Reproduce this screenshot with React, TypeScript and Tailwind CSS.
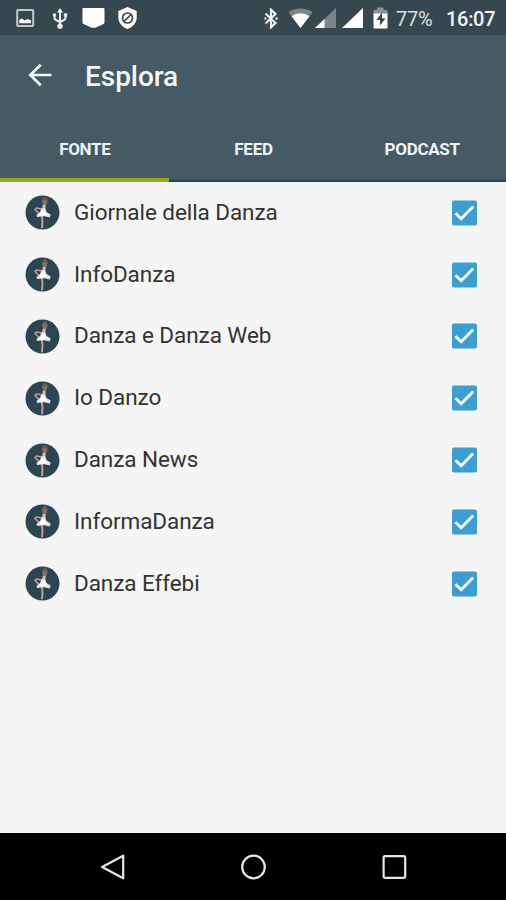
import { useState } from 'react';

const tabs = ['FONTE', 'FEED', 'PODCAST'];

const sources = [
  'Giornale della Danza',
  'InfoDanza',
  'Danza e Danza Web',
  'Io Danzo',
  'Danza News',
  'InformaDanza',
  'Danza Effebi',
];

const StatusBar = () => (
  <div className="flex h-[35px] shrink-0 items-start bg-[#37474f] text-white">
    <svg className="ml-[16px] mt-[9px] h-[18px] w-[19px]" viewBox="0 0 19 18" fill="none">
      <rect x="1.2" y="1" width="16" height="16" rx=".8" stroke="#c3cacd" strokeWidth="2" />
      <path d="M3.300 14.300v-3.500L6 9.500l2.500 2 3-1.500 3.500 1.500v2.800z" fill="#fff" />
    </svg>
    <svg className="ml-[17px] mt-[8px] h-[21px] w-[16px]" viewBox="0 0 16 21" fill="none" stroke="#eef0f1" strokeWidth="2">
      <path d="M8 3v15M2.500 7.500v2.200c0 1.800 1 2.300 2.500 2.800l3 1.500M13.500 7.500v2c0 1.800-1 2.500-2.500 3l-3 1.500" />
      <path d="M8 0l3 4.500h-6z" fill="#eef0f1" stroke="none" />
      <circle cx="8" cy="18.300" r="2.700" fill="#eef0f1" stroke="none" />
      <circle cx="2.500" cy="7" r="1.800" fill="#eef0f1" stroke="none" />
      <path d="M11.800 5.300h3.400v3.400h-3.400z" fill="#eef0f1" stroke="none" />
    </svg>
    <svg className="ml-[14px] mt-[8px] h-[20px] w-[23px]" viewBox="0 0 23 20" fill="#fff">
      <path d="M1.500 0h20Q22.500 0 22.500 1v13.500q0 1-1 1.500l-7 3.300q-3 1-6 0L1.500 16q-1-.5-1-1.500V1q0-1 1-1z" />
    </svg>
    <svg className="ml-[12.500px] mt-[7px] h-[22px] w-[19px]" viewBox="0 0 19 22" fill="none">
      <path d="M9.500 0L18.700 4v6.500c0 5-4 10-9.200 11.500C4.300 20.500.3 15.500.3 10.500V4z" fill="#fff" />
      <circle cx="9.500" cy="11" r="5" stroke="#37474f" strokeWidth="1.700" />
      <path d="M6 14.500l7-7" stroke="#37474f" strokeWidth="1.700" />
    </svg>

    <svg className="ml-auto mt-[8px] h-[21px] w-[14px]" viewBox="0 0 14 21" fill="none" stroke="#eef0f1" strokeWidth="2.200">
      <path d="M1.500 5.500l10 9.500L7 19.300V1.700L11.500 6l-10 9.500" />
      <path d="M1.400 10.500h.1M12.500 10.500h.1" strokeWidth="2.400" strokeLinecap="round" />
    </svg>
    <svg className="ml-[10px] mt-[8px] h-[20px] w-[26px]" viewBox="0 0 26 20">
      <path d="M12.500 20L.5 4.200Q6 .5 12.500.5t12 3.700z" fill="#7b868b" />
      <path d="M12.500 20L3.500 8.300Q7.500 5.300 12.500 5.300t9 3z" fill="#fff" />
    </svg>
    <svg className="ml-[1px] mt-[8px] h-[20px] w-[21px]" viewBox="0 0 21 20">
      <path d="M0 20L21 0v20z" fill="#7b868b" />
      <path d="M0 20l9.500-9v9z" fill="#fff" />
    </svg>
    <svg className="ml-[6px] mt-[8px] h-[20px] w-[21px]" viewBox="0 0 21 20">
      <path d="M0 20L21 0v20z" fill="#fff" />
    </svg>
    <svg className="ml-[10px] mt-[7px] h-[22px] w-[15px]" viewBox="0 0 15 22">
      <path d="M4 .5h6.500V3H13q1.500 0 1.500 1v3H.5V4q0-1 1-1H4z" fill="#8b969a" />
      <path d="M.5 6.500h14v14q0 1-1 1h-12q-1 0-1-1z" fill="#fff" />
      <path d="M9 5.500L3.500 13H7v5.500l5.500-7.300H9z" fill="#37474f" />
    </svg>
    <span className="ml-[8px] mt-[5px] w-[50px] whitespace-nowrap text-[20px] leading-7 tracking-[-0.2px] text-[#dce0e2]">77%</span>
    <span className="mt-[5px] w-[60px] whitespace-nowrap text-[20px] font-medium leading-7 tracking-[-0.3px] text-[#f3f5f6]">16:07</span>
  </div>
);

// Dancer on a dark disc, shared by every source
const SourceAvatar = () => (
  <svg className="h-[35px] w-[35px] shrink-0" viewBox="0 0 35 35">
    <circle cx="17.500" cy="17.500" r="17" fill="#2b4552" />
    <path d="M18.500 8L18 5l2.500-3M20.500 10l1.500-4-1-3" fill="none" stroke="#80665c" strokeWidth="1.400" />
    <circle cx="19.400" cy="7" r="2.200" fill="#906d61" />
    <path d="M17.500 14l-6-1-1.500 1.500 5 5" fill="none" stroke="#c49f92" strokeWidth="1.600" />
    <path d="M16.800 21l.7 5.500-.5 6.800" fill="none" stroke="#c9a291" strokeWidth="1.900" />
    <path d="M17.800 9.500h3l-.6 6-3.700 1z" fill="#dcb5a7" />
    <path d="M16.500 13.500l3.500-.5 1.500 4 4.200 2.500-1 3-5.200-1.200-7.500.7-.5-2 3.500-3z" fill="#ebe4e8" />
    <path d="M17 15l-3.500 5.500 8-.5-2-4z" fill="#fff" />
  </svg>
);

interface SourceRowProps {
  name: string;
  checked: boolean;
  onToggle: () => void;
}

const SourceRow = ({ name, checked, onToggle }: SourceRowProps) => (
  <li className="flex h-[61.800px] items-center pl-[25px] pr-[29px]">
    <SourceAvatar />
    <span className="-mt-0.5 ml-[14px] flex-1 whitespace-nowrap text-[22.500px] leading-7 tracking-[-0.070px] text-[#333333]">{name}</span>
    <button type="button" role="checkbox" aria-checked={checked} aria-label={name} onClick={onToggle}>
      <svg className="block h-[26px] w-[26px]" viewBox="0 0 26 26" fill="none">
        <rect x="1" y=".5" width="25" height="25" rx="2" fill={checked ? '#3b9fd4' : '#8a8a8a'} />
        {checked && <path d="M4.500 13.200l5.700 5.500L22.200 6.500" stroke="#fff" strokeWidth="2.800" />}
      </svg>
    </button>
  </li>
);

const NavigationBar = () => (
  <nav className="flex h-[67px] shrink-0 items-center justify-center bg-black">
    <svg className="h-[28px] w-[26px]" viewBox="0 0 26 28" fill="none">
      <path d="M24.200 2.700v22.600L3.100 14z" stroke="#e6e6e6" strokeWidth="2.200" strokeLinejoin="round" />
    </svg>
    <svg className="ml-[114px] h-[28px] w-[28px]" viewBox="0 0 28 28" fill="none">
      <circle cx="14.500" cy="14" r="11.300" stroke="#e6e6e6" strokeWidth="2.200" />
    </svg>
    <svg className="ml-[114px] h-[26px] w-[26px]" viewBox="0 0 26 26" fill="none">
      <rect x="2.600" y="2.200" width="21.600" height="21.600" rx="1.500" stroke="#e6e6e6" strokeWidth="2.200" />
    </svg>
  </nav>
);

export default function App() {
  const [activeTab, setActiveTab] = useState(0);
  const [unchecked, setUnchecked] = useState<string[]>([]);

  const toggle = (name: string) => {
    setUnchecked((prev) => (prev.includes(name) ? prev.filter((n) => n !== name) : [...prev, name]));
  };

  return (
    <div className="flex h-[900px] w-[506px] flex-col overflow-hidden bg-[#f5f5f5] font-['Roboto',sans-serif]">
      <StatusBar />

      <header className="shrink-0 bg-[#455a64] text-white">
        <div className="flex h-[81px] items-center pl-[28px]">
          <svg className="-mt-0.5 h-[24px] w-[24px]" viewBox="0 0 24 24" fill="none" stroke="#f4f7f8" strokeWidth="2.700">
            <path d="M23.500 12H2.500M12.700 1.700L2.300 12l10.400 10.300" />
          </svg>
          <h1 className="mt-0.5 ml-[33px] text-[28px] font-medium leading-8 tracking-[-0.050px] text-[#f4f7f8]">Esplora</h1>
        </div>
        <div className="flex h-[66px] border-b-2 border-[#234755]">
          {tabs.map((tab, index) => (
            <button
              key={tab}
              type="button"
              onClick={() => setActiveTab(index)}
              className={`-mb-0.5 flex-1 border-b-[4px] pt-[5px] pl-[1px] text-[17px] font-bold tracking-[-0.300px] text-[#edf4f8] ${
                index === activeTab ? 'border-[#96a91f]' : 'border-transparent'
              }`}
            >
              {tab}
            </button>
          ))}
        </div>
      </header>

      <ul className="flex-1">
        {sources.map((name) => (
          <SourceRow key={name} name={name} checked={!unchecked.includes(name)} onToggle={() => toggle(name)} />
        ))}
      </ul>

      <NavigationBar />
    </div>
  );
}
